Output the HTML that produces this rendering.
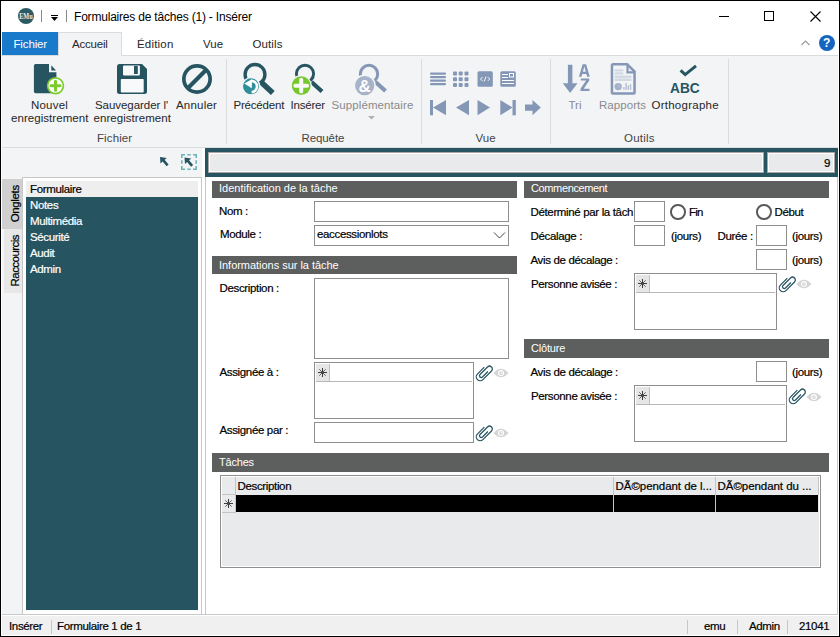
<!DOCTYPE html>
<html><head><meta charset="utf-8">
<style>
*{margin:0;padding:0;box-sizing:border-box}
html,body{width:840px;height:637px;overflow:hidden;background:#fff}
body{position:relative;font-family:"Liberation Sans",sans-serif;font-size:11px;color:#000}
.a{position:absolute}
.t{position:absolute;white-space:nowrap;line-height:1}
.rl{font-size:11.5px;color:#262626}
.gl{font-size:11.5px;color:#444}
.fl{font-size:11.5px;letter-spacing:-0.35px;color:#000;-webkit-text-stroke-width:0.2px}
.hd{position:absolute;background:#5d5e5e;height:17px}
.hd span{position:absolute;left:7px;top:3px;color:#fff;font-size:11px;letter-spacing:-0.2px;line-height:1;white-space:nowrap}
.inp{position:absolute;border:1px solid #8e8e8e;background:#fff}
.sep{position:absolute;width:1px;background:#dcdcdc}
</style></head><body>
<!-- window border -->
<div class="a" style="left:0;top:0;width:840px;height:637px;border:1px solid #000;z-index:50;pointer-events:none"></div>

<!-- title bar -->
<div class="a" style="left:18px;top:8px;width:16px;height:16px;border-radius:50%;background:#2b5a63"></div>
<svg class="a" style="left:18px;top:8px" width="16" height="16"><text x="1.2" y="10.7" textLength="13.6" lengthAdjust="spacingAndGlyphs" font-family="Liberation Serif" font-weight="bold" font-size="8" fill="#e6ecee">EMu</text></svg>
<div class="a" style="left:41px;top:10px;width:1px;height:12px;background:#888"></div>
<div class="a" style="left:51px;top:15px;width:7px;height:1px;background:#000"></div>
<svg class="a" style="left:51px;top:17px" width="7" height="4"><path d="M0 0H7L3.5 4Z" fill="#000"/></svg>
<div class="a" style="left:66px;top:10px;width:1px;height:12px;background:#888"></div>
<div class="t" style="left:74px;top:11px;font-size:12px;letter-spacing:-0.2px;color:#000">Formulaires de tâches (1) - Insérer</div>
<div class="a" style="left:719px;top:16px;width:10px;height:1px;background:#000"></div>
<div class="a" style="left:764px;top:11px;width:10px;height:10px;border:1px solid #000"></div>
<svg class="a" style="left:810px;top:11px" width="11" height="11"><path d="M0.5 0.5L10.5 10.5M10.5 0.5L0.5 10.5" stroke="#000" stroke-width="1.1"/></svg>

<!-- tabs -->
<div class="a" style="left:2px;top:32px;width:56px;height:23px;background:#1979ca"></div>
<div class="t" style="left:13.5px;top:39px;font-size:11.5px;color:#fff;letter-spacing:-0.15px">Fichier</div>
<div class="a" style="left:58px;top:32px;width:64px;height:24px;background:#f3f4f6;border:1px solid #dadbdc;border-bottom:none;z-index:2"></div>
<div class="t" style="left:72px;top:39px;font-size:11.5px;color:#262626;letter-spacing:-0.2px;z-index:3">Accueil</div>
<div class="t" style="left:137px;top:38.5px;font-size:11.5px;color:#262626;letter-spacing:0.2px">Édition</div>
<div class="t" style="left:203px;top:39px;font-size:11.5px;color:#262626">Vue</div>
<div class="t" style="left:252.5px;top:39px;font-size:11.5px;color:#262626;letter-spacing:0.1px">Outils</div>
<svg class="a" style="left:801px;top:40px" width="9" height="6"><path d="M0.5 5L4.5 1L8.5 5" stroke="#9a9a9a" stroke-width="1.2" fill="none"/></svg>
<div class="a" style="left:819px;top:35px;width:16px;height:16px;border-radius:50%;background:#1565c0"></div>
<div class="t" style="left:823px;top:37px;font-size:12px;font-weight:bold;color:#fff">?</div>

<!-- ribbon -->
<div class="a" style="left:2px;top:55px;width:836px;height:93px;background:#f3f4f6;border-top:1px solid #dadbdc;border-bottom:1px solid #dadbdc"></div>
<div class="sep" style="left:226px;top:59px;height:85px"></div>
<div class="sep" style="left:421px;top:59px;height:85px"></div>
<div class="sep" style="left:550px;top:59px;height:85px"></div>
<div class="sep" style="left:728px;top:59px;height:85px"></div>


<!-- Nouvel -->
<svg class="a" style="left:30px;top:60px" width="40" height="40">
<path d="M5.6 4H19V12.3H26.4V31.6Q26.4 33.3 24.7 33.3H5.6Q3.9 33.3 3.9 31.6V5.7Q3.9 4 5.6 4Z" fill="#275461"/>
<path d="M21.3 5.2V10.4H26Z" fill="#275461"/>
<circle cx="25.5" cy="25.8" r="7.9" fill="#fff" stroke="#7ccc2a" stroke-width="1.7"/>
<path d="M21 25.8H30M25.5 21.3V30.3" stroke="#7ccc2a" stroke-width="3.1" stroke-linecap="round"/>
</svg>
<div class="t rl" style="left:31px;top:100px;letter-spacing:0.2px">Nouvel</div>
<div class="t rl" style="left:11px;top:113px;letter-spacing:0.05px">enregistrement</div>
<!-- Save -->
<svg class="a" style="left:115px;top:62px" width="34" height="34">
<path d="M4.5 2H27L32 7V29.5Q32 32 29.5 32H4.5Q2 32 2 29.5V4.5Q2 2 4.5 2Z" fill="#275461"/>
<rect x="8" y="3.6" width="16.9" height="9.8" rx="0.8" fill="#f8f9fa"/>
<rect x="19" y="3.9" width="3.8" height="8.1" fill="#275461"/>
<rect x="5.8" y="16.9" width="22.9" height="13.7" rx="0.8" fill="#f8f9fa"/>
</svg>
<div class="t rl" style="left:95px;top:100px;letter-spacing:-0.05px">Sauvegarder l'</div>
<div class="t rl" style="left:93.5px;top:113px;letter-spacing:0.05px">enregistrement</div>
<!-- Annuler -->
<svg class="a" style="left:180px;top:62px" width="34" height="34">
<circle cx="17" cy="17" r="13.15" fill="none" stroke="#275461" stroke-width="3.7"/>
<path d="M26.5 7.5L7.5 26.5" stroke="#275461" stroke-width="4"/>
</svg>
<div class="t rl" style="left:176px;top:100px;letter-spacing:0.2px">Annuler</div>
<div class="t gl" style="left:97px;top:133px;letter-spacing:0.1px">Fichier</div>

<!-- Precedent -->
<svg class="a" style="left:236px;top:60px" width="42" height="40">
<path d="M25.5 22.5L36.8 33" stroke="#275461" stroke-width="5.6"/>
<circle cx="19" cy="14.4" r="9.9" fill="none" stroke="#275461" stroke-width="3.4"/>
<circle cx="15" cy="26.3" r="9.4" fill="#f3f4f6"/>
<circle cx="15" cy="26.3" r="8" fill="#2e8f9a"/>
<path d="M8.3 23.4L16 19.3L15.8 28.2Z" fill="#fff"/>
<path d="M15.2 20.9A5.6 5.6 0 0 1 15.6 32.1" stroke="#fff" stroke-width="2.6" fill="none"/>
</svg>
<div class="t rl" style="left:233.5px;top:100px;letter-spacing:-0.2px">Précédent</div>
<!-- Inserer -->
<svg class="a" style="left:286px;top:60px" width="42" height="40">
<path d="M25.5 22L36 31.5" stroke="#275461" stroke-width="4.3"/>
<circle cx="19" cy="13.8" r="8.6" fill="none" stroke="#275461" stroke-width="2.9"/>
<circle cx="15.2" cy="25.7" r="10.6" fill="#f3f4f6"/>
<circle cx="15.2" cy="25.7" r="9.4" fill="#76c72b"/>
<path d="M9.3 25.7H21.1M15.2 19.8V31.6" stroke="#f8f9f6" stroke-width="4" stroke-linecap="round"/>
</svg>
<div class="t rl" style="left:290.5px;top:100px;letter-spacing:-0.2px">Insérer</div>
<!-- Supplementaire -->
<svg class="a" style="left:350px;top:60px" width="42" height="40">
<path d="M25.5 22L35.5 31" stroke="#8497b6" stroke-width="4.2"/>
<circle cx="19" cy="14" r="8.7" fill="none" stroke="#8497b6" stroke-width="3"/>
<circle cx="14.7" cy="25.6" r="11" fill="#f3f4f6"/>
<circle cx="14.7" cy="25.6" r="9.6" fill="#a6b3c9"/>
<text x="14.7" y="32" text-anchor="middle" font-family="Liberation Sans" font-weight="bold" font-size="17" fill="#fff">&amp;</text>
</svg>
<div class="t rl" style="left:331.5px;top:100px;color:#8a8a8a;letter-spacing:0.1px">Supplémentaire</div>
<svg class="a" style="left:368px;top:116px" width="7" height="4"><path d="M0 0H7L3.5 3.5Z" fill="#b0b0b0"/></svg>
<div class="t gl" style="left:301.5px;top:133px;letter-spacing:-0.1px">Requête</div>

<!-- Vue -->
<svg class="a" style="left:428px;top:68px" width="120" height="52">
<g fill="#8497b6">
<rect x="2" y="4.5" width="16" height="2.2" rx="1"/><rect x="2" y="8" width="16" height="2.2" rx="1"/><rect x="2" y="11.5" width="16" height="2.2" rx="1"/><rect x="2" y="15" width="16" height="2.2" rx="1"/>
<rect x="25" y="3.5" width="4" height="4" rx="1"/><rect x="30.7" y="3.5" width="4" height="4" rx="1"/><rect x="36.5" y="3.5" width="4" height="4" rx="1"/>
<rect x="25" y="9.3" width="4" height="4" rx="1"/><rect x="30.7" y="9.3" width="4" height="4" rx="1"/><rect x="36.5" y="9.3" width="4" height="4" rx="1"/>
<rect x="25" y="15" width="4" height="4" rx="1"/><rect x="30.7" y="15" width="4" height="4" rx="1"/><rect x="36.5" y="15" width="4" height="4" rx="1"/>
<rect x="49.5" y="3.3" width="15.3" height="15.4" rx="1.5"/>
<rect x="72.3" y="3.3" width="15.5" height="15.4" rx="1.5"/>
</g>
<path d="M54.5 9L52.5 11L54.5 13M59.7 9L61.7 11L59.7 13M58 8.5L56.2 13.5" stroke="#fff" stroke-width="0.9" fill="none"/>
<path d="M74 6.5H80M74 9.5H80M74 12.5H86M74 15.5H86" stroke="#fff" stroke-width="1"/>
<rect x="81.5" y="5.5" width="4" height="3.5" fill="none" stroke="#fff" stroke-width="1"/>
<g fill="#8497b6">
<rect x="2" y="32" width="3" height="15.3"/><path d="M5 39.6L18 32V47.3Z"/>
<path d="M28 39.6L41 32V47.3Z"/>
<path d="M49.5 32L62 39.6L49.5 47.3Z"/>
<path d="M72.3 32L84.5 39.6L72.3 47.3Z"/><rect x="84.5" y="32" width="3.3" height="15.3"/>
<path d="M97 36.5H104.5V32L112.8 39.6L104.5 47.3V42.7H97Z"/>
</g>
</svg>
<div class="t gl" style="left:475.5px;top:133px">Vue</div>

<!-- Tri -->
<svg class="a" style="left:560px;top:62px" width="34" height="34">
<path d="M7.9 2.7H12.4V21.3H17.5L10.15 31L2.8 21.3H7.9Z" fill="#8497b6"/>
<path fill-rule="evenodd" d="M18.9 14.8L22.6 2.3H26.1L29.8 14.8H27.2L26.4 12H22.3L21.5 14.8ZM22.9 9.8H25.8L24.35 4.6Z" fill="#8497b6"/>
<path d="M20.8 16.4H29.3V18.6L23.7 26.8H29.5V29H20.5V26.8L26.1 18.6H20.8Z" fill="#8497b6"/>
</svg>
<div class="t rl" style="left:568.5px;top:100px;color:#8a8a8a">Tri</div>
<!-- Rapports -->
<svg class="a" style="left:608px;top:61px" width="32" height="36">
<g fill="#d3dae6"><rect x="6.5" y="8.3" width="9" height="2.3" rx="1"/><rect x="6.5" y="11.3" width="9" height="2.3" rx="1"/><rect x="6.5" y="14.6" width="17.2" height="2.3" rx="1"/><rect x="6.5" y="17.6" width="17.2" height="2.3" rx="1"/></g>
<path d="M5.2 3.25H19.2L26.55 10.6V31.3Q26.55 32.55 25.3 32.55H5.2Q3.95 32.55 3.95 31.3V4.5Q3.95 3.25 5.2 3.25Z" fill="none" stroke="#8497b6" stroke-width="2.5"/>
<path d="M19.5 3.25V11.4H26.55" fill="none" stroke="#8497b6" stroke-width="2.2"/>
<circle cx="10.2" cy="25.6" r="3.7" fill="#a3b0c8"/>
<path d="M10.2 21.9V25.6H13.6" stroke="#c3cbdb" stroke-width="0.6" fill="none"/>
<g fill="#b3bed2"><rect x="15.2" y="26" width="1.4" height="2.8"/><rect x="17.4" y="22" width="1.4" height="6.8"/><rect x="19.6" y="24.4" width="1.4" height="4.4"/><rect x="21.8" y="23.2" width="1.4" height="5.6"/></g>
</svg>
<div class="t rl" style="left:599px;top:100px;color:#8a8a8a;letter-spacing:0.05px">Rapports</div>
<!-- Orthographe -->
<svg class="a" style="left:666px;top:62px" width="40" height="34">
<path d="M14.6 8.3L19.2 12.6L30 3.9" stroke="#275461" stroke-width="3" fill="none"/>
<text x="4" y="30.8" textLength="29.7" lengthAdjust="spacingAndGlyphs" font-family="Liberation Sans" font-weight="bold" font-size="15.5" fill="#275461">ABC</text>
</svg>
<div class="t rl" style="left:651.5px;top:100px;letter-spacing:0.25px">Orthographe</div>
<div class="t gl" style="left:624px;top:133px;letter-spacing:0.2px">Outils</div>


<!-- left panel toolbar -->
<div class="a" style="left:2px;top:148px;width:200px;height:467px;background:#f3f4f6"></div>
<svg class="a" style="left:158px;top:155px" width="12" height="13"><path d="M2 2L2.5 8.5L4.6 6.6L8.6 11.2L10.6 9.5L6.6 4.8L8.8 3Z" fill="#275461"/></svg>
<svg class="a" style="left:180px;top:153px" width="18" height="18">
<path d="M1.8 5V1.8H5M7.3 1.8H10.7M13 1.8H16.2V5M16.2 7.3V10.7M16.2 13V16.2H13M10.7 16.2H7.3M5 16.2H1.8V13M1.8 10.7V7.3" fill="none" stroke="#6db5b7" stroke-width="1.6"/>
<path d="M4.5 4.5L5 11L7.1 9.1L11.1 13.7L13.1 12L9.1 7.3L11.3 5.5Z" fill="#275461"/>
</svg>
<!-- vertical tabs -->
<div class="a" style="left:2px;top:179px;width:20px;height:50px;background:#d0d0d0"></div>
<div class="a" style="left:4px;top:229px;width:18px;height:64px;background:#e8e8e8"></div>
<div class="t fl" style="left:-9.5px;top:198px;transform:rotate(-90deg);transform-origin:center;width:50px;text-align:center;color:#000">Onglets</div>
<div class="t fl" style="left:-14px;top:254.5px;transform:rotate(-90deg);transform-origin:center;width:60px;text-align:center;color:#000;letter-spacing:-0.55px">Raccourcis</div>
<!-- list box -->
<div class="a" style="left:22px;top:177px;width:180px;height:438px;background:#fff;border:1px solid #c8c8c8"></div>
<div class="a" style="left:26px;top:181px;width:172px;height:16px;background:#eeeeee"></div>
<div class="a" style="left:26px;top:197px;width:172px;height:413px;background:#275461"></div>
<div class="t fl" style="left:30px;top:184px">Formulaire</div>
<div class="t fl" style="left:30px;top:200px;color:#fff">Notes</div>
<div class="t fl" style="left:30px;top:216px;color:#fff">Multimédia</div>
<div class="t fl" style="left:30px;top:232px;color:#fff">Sécurité</div>
<div class="t fl" style="left:30px;top:248px;color:#fff">Audit</div>
<div class="t fl" style="left:30px;top:264px;color:#fff">Admin</div>

<!-- top teal frame -->
<div class="a" style="left:205px;top:148px;width:633px;height:29px;background:#275461"></div>
<div class="a" style="left:208px;top:152px;width:556px;height:21px;background:#e9eaec;border:1px solid #a9a3a3;box-shadow:inset 0 0 0 1px #fff"></div>
<div class="a" style="left:767px;top:152px;width:68px;height:21px;background:#e9eaec;border:1px solid #a9a3a3;box-shadow:inset 0 0 0 1px #fff"></div>
<div class="t fl" style="left:824px;top:158px">9</div>

<!-- form panel -->
<div class="a" style="left:205px;top:177px;width:633px;height:438px;background:#fff;border-left:1px solid #c8c8c8;border-right:1px solid #c8c8c8;border-bottom:1px solid #c8c8c8"></div>

<div class="hd" style="left:212px;top:181px;width:305px"><span style="letter-spacing:0px;top:2px">Identification de la tâche</span></div>
<div class="t fl" style="left:219px;top:206px">Nom :</div>
<div class="inp" style="left:314px;top:201px;width:195px;height:21px"></div>
<div class="t fl" style="left:220px;top:229px">Module :</div>
<div class="inp" style="left:314px;top:225px;width:195px;height:21px"></div>
<div class="t fl" style="left:317px;top:229px">eaccessionlots</div>
<svg class="a" style="left:492.5px;top:231px" width="14" height="9"><path d="M1 1.5L6.5 7L12 1.5" stroke="#444" stroke-width="1" fill="none"/></svg>

<div class="hd" style="left:212px;top:256px;width:305px;height:18px"><span style="top:4px;letter-spacing:-0.03px">Informations sur la tâche</span></div>
<div class="t fl" style="left:219.5px;top:283px">Description :</div>
<div class="inp" style="left:314px;top:278px;width:195px;height:81px"></div>
<div class="t fl" style="left:219.5px;top:367px">Assignée à :</div>
<div class="inp" style="left:314px;top:362px;width:160px;height:57px"></div>
<div class="a" style="left:316px;top:364px;width:14px;height:17px;background:#e6e6e6"></div>
<div class="a" style="left:316px;top:381px;width:156px;height:1px;background:#b8b8b8"></div>
<div class="t fl" style="left:219.5px;top:425px">Assignée par :</div>
<div class="inp" style="left:314px;top:422px;width:160px;height:21px"></div>

<div class="hd" style="left:212px;top:453px;width:617px;height:19px"><span style="top:4px">Tâches</span></div>
<div class="a" style="left:220px;top:475px;width:601px;height:93px;background:#e9eaec;border:1px solid #8e8e8e;box-shadow:inset 0 0 0 1px #fff"></div>
<div class="a" style="left:235px;top:477px;width:1px;height:35px;background:#c4c4c4"></div>
<div class="a" style="left:222px;top:494px;width:14px;height:1px;background:#c4c4c4"></div>
<div class="a" style="left:222px;top:512px;width:14px;height:1px;background:#c4c4c4"></div>
<div class="a" style="left:236px;top:495px;width:582px;height:17px;background:#000"></div>
<div class="a" style="left:613px;top:477px;width:1px;height:35px;background:#c4c4c4"></div>
<div class="a" style="left:715px;top:477px;width:1px;height:35px;background:#c4c4c4"></div>
<div class="a" style="left:818px;top:477px;width:1px;height:18px;background:#c4c4c4"></div>
<div class="t fl" style="left:237.5px;top:481px">Description</div>
<div class="t fl" style="left:615.5px;top:481px;letter-spacing:-0.05px">DÃ©pendant de l...</div>
<div class="t fl" style="left:717.5px;top:481px;letter-spacing:-0.05px">DÃ©pendant du ...</div>

<div class="hd" style="left:524px;top:181px;width:305px"><span style="letter-spacing:-0.37px;top:2px">Commencement</span></div>
<div class="t fl" style="left:530.5px;top:207px">Déterminé par la tâch</div>
<div class="inp" style="left:634px;top:201px;width:31px;height:21px"></div>
<div class="a" style="left:670px;top:204px;width:15.5px;height:15.5px;border:2.3px solid #595959;border-radius:50%"></div>
<div class="t fl" style="left:689px;top:207px;letter-spacing:-0.8px">Fin</div>
<div class="a" style="left:756px;top:204px;width:15.5px;height:15.5px;border:2.3px solid #595959;border-radius:50%"></div>
<div class="t fl" style="left:774.5px;top:207px">Début</div>
<div class="t fl" style="left:530.5px;top:231px">Décalage :</div>
<div class="inp" style="left:634px;top:225px;width:31px;height:21px"></div>
<div class="t fl" style="left:671px;top:231px">(jours)</div>
<div class="t fl" style="left:717.5px;top:231px">Durée :</div>
<div class="inp" style="left:756px;top:225px;width:31px;height:21px"></div>
<div class="t fl" style="left:792px;top:231px">(jours)</div>
<div class="t fl" style="left:530.5px;top:255px">Avis de décalage :</div>
<div class="inp" style="left:756px;top:249px;width:31px;height:21px"></div>
<div class="t fl" style="left:792px;top:255px">(jours)</div>
<div class="t fl" style="left:531px;top:279px">Personne avisée :</div>
<div class="inp" style="left:634px;top:273px;width:143px;height:57px"></div>
<div class="a" style="left:636px;top:275px;width:14px;height:17px;background:#e6e6e6"></div>
<div class="a" style="left:636px;top:292px;width:139px;height:1px;background:#b8b8b8"></div>

<div class="hd" style="left:524px;top:339px;width:305px;height:19px"><span style="top:4px">Clôture</span></div>
<div class="t fl" style="left:530.5px;top:367px">Avis de décalage :</div>
<div class="inp" style="left:756px;top:361px;width:31px;height:21px"></div>
<div class="t fl" style="left:792px;top:367px">(jours)</div>
<div class="t fl" style="left:531px;top:391px">Personne avisée :</div>
<div class="inp" style="left:634px;top:385px;width:153px;height:57px"></div>
<div class="a" style="left:636px;top:387px;width:14px;height:17px;background:#e6e6e6"></div>
<div class="a" style="left:636px;top:404px;width:149px;height:1px;background:#b8b8b8"></div>

<div class="a" style="left:329px;top:364px;width:1px;height:17px;background:#c0c0c0"></div>
<div class="a" style="left:649px;top:275px;width:1px;height:17px;background:#c0c0c0"></div>
<div class="a" style="left:649px;top:387px;width:1px;height:17px;background:#c0c0c0"></div>
<svg class="a" style="left:317px;top:367px" width="11" height="11"><path d="M5.5 1V10M1 5.5H10" stroke="#3c3c3c" stroke-width="1"/><path d="M2.3 2.3L8.7 8.7M8.7 2.3L2.3 8.7" stroke="#505050" stroke-width="0.9"/></svg>
<svg class="a" style="left:637px;top:278px" width="11" height="11"><path d="M5.5 1V10M1 5.5H10" stroke="#3c3c3c" stroke-width="1"/><path d="M2.3 2.3L8.7 8.7M8.7 2.3L2.3 8.7" stroke="#505050" stroke-width="0.9"/></svg>
<svg class="a" style="left:637px;top:390px" width="11" height="11"><path d="M5.5 1V10M1 5.5H10" stroke="#3c3c3c" stroke-width="1"/><path d="M2.3 2.3L8.7 8.7M8.7 2.3L2.3 8.7" stroke="#505050" stroke-width="0.9"/></svg>
<svg class="a" style="left:223px;top:498px" width="11" height="11"><path d="M5.5 1V10M1 5.5H10" stroke="#3c3c3c" stroke-width="1"/><path d="M2.3 2.3L8.7 8.7M8.7 2.3L2.3 8.7" stroke="#505050" stroke-width="0.9"/></svg>
<svg class="a" style="left:471px;top:359.7px" width="26" height="26" viewBox="0 0 24 24"><path transform="rotate(45 12 12)" d="M8.4 8V17A3.6 3.6 0 0 0 15.6 17V5.8A2.6 2.6 0 0 0 10.4 5.8V15.6A1.6 1.6 0 0 0 13.6 15.6V8.5" fill="none" stroke="#275461" stroke-width="1.15"/></svg>
<svg class="a" style="left:493px;top:368px" width="16" height="10"><path d="M0.5 5Q8 -3.5 15.5 5Q8 13.5 0.5 5Z" fill="#d4d4d4"/><circle cx="8" cy="5" r="3" fill="#fff"/><circle cx="8" cy="5" r="1.9" fill="#d4d4d4"/><path d="M8 3.2V5H9.6" stroke="#fff" stroke-width="0.7" fill="none"/></svg>
<svg class="a" style="left:471px;top:419.5px" width="26" height="26" viewBox="0 0 24 24"><path transform="rotate(45 12 12)" d="M8.4 8V17A3.6 3.6 0 0 0 15.6 17V5.8A2.6 2.6 0 0 0 10.4 5.8V15.6A1.6 1.6 0 0 0 13.6 15.6V8.5" fill="none" stroke="#275461" stroke-width="1.15"/></svg>
<svg class="a" style="left:493px;top:428px" width="16" height="10"><path d="M0.5 5Q8 -3.5 15.5 5Q8 13.5 0.5 5Z" fill="#d4d4d4"/><circle cx="8" cy="5" r="3" fill="#fff"/><circle cx="8" cy="5" r="1.9" fill="#d4d4d4"/><path d="M8 3.2V5H9.6" stroke="#fff" stroke-width="0.7" fill="none"/></svg>
<svg class="a" style="left:774px;top:270.5px" width="26" height="26" viewBox="0 0 24 24"><path transform="rotate(45 12 12)" d="M8.4 8V17A3.6 3.6 0 0 0 15.6 17V5.8A2.6 2.6 0 0 0 10.4 5.8V15.6A1.6 1.6 0 0 0 13.6 15.6V8.5" fill="none" stroke="#275461" stroke-width="1.15"/></svg>
<svg class="a" style="left:796px;top:279px" width="16" height="10"><path d="M0.5 5Q8 -3.5 15.5 5Q8 13.5 0.5 5Z" fill="#d4d4d4"/><circle cx="8" cy="5" r="3" fill="#fff"/><circle cx="8" cy="5" r="1.9" fill="#d4d4d4"/><path d="M8 3.2V5H9.6" stroke="#fff" stroke-width="0.7" fill="none"/></svg>
<svg class="a" style="left:784px;top:383px" width="26" height="26" viewBox="0 0 24 24"><path transform="rotate(45 12 12)" d="M8.4 8V17A3.6 3.6 0 0 0 15.6 17V5.8A2.6 2.6 0 0 0 10.4 5.8V15.6A1.6 1.6 0 0 0 13.6 15.6V8.5" fill="none" stroke="#275461" stroke-width="1.15"/></svg>
<svg class="a" style="left:806px;top:391.5px" width="16" height="10"><path d="M0.5 5Q8 -3.5 15.5 5Q8 13.5 0.5 5Z" fill="#d4d4d4"/><circle cx="8" cy="5" r="3" fill="#fff"/><circle cx="8" cy="5" r="1.9" fill="#d4d4d4"/><path d="M8 3.2V5H9.6" stroke="#fff" stroke-width="0.7" fill="none"/></svg>

<!-- status bar -->
<div class="a" style="left:2px;top:614px;width:836px;height:21px;background:#f0f0f0;border-top:1px solid #c9c9c9;box-shadow:inset 0 1px 0 #fff"></div>
<div class="t fl" style="left:9px;top:621px">Insérer</div>
<div class="a" style="left:51px;top:620px;width:1px;height:14px;background:#c8c8c8"></div>
<div class="t fl" style="left:57px;top:621px">Formulaire 1 de 1</div>
<div class="a" style="left:687px;top:620px;width:1px;height:14px;background:#c8c8c8"></div>
<div class="t fl" style="left:704px;top:621px">emu</div>
<div class="a" style="left:737px;top:620px;width:1px;height:14px;background:#c8c8c8"></div>
<div class="t fl" style="left:749px;top:621px">Admin</div>
<div class="a" style="left:787px;top:620px;width:1px;height:14px;background:#c8c8c8"></div>
<div class="t fl" style="left:799px;top:621px">21041</div>

</body></html>
